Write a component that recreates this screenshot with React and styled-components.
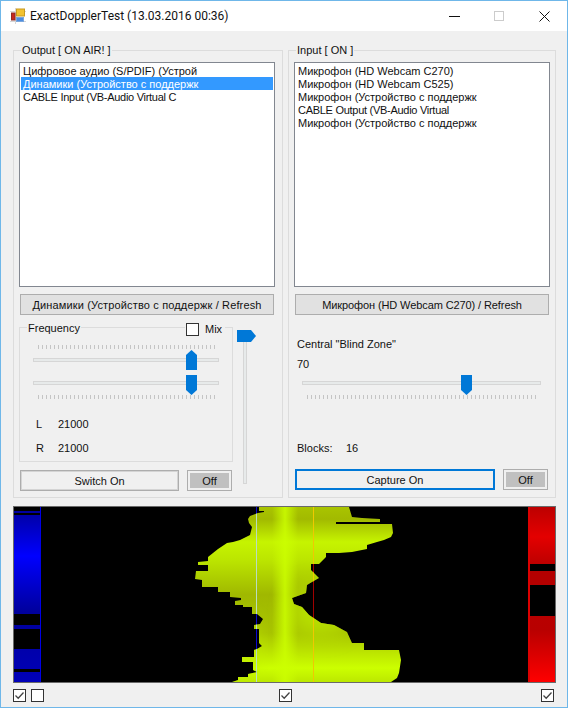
import styled, { createGlobalStyle } from "styled-components";

const GlobalStyle = createGlobalStyle`
  html, body {
    margin: 0;
    padding: 0;
    background: #f0f0f0;
  }
`;

const Win = styled.div`
  box-sizing: border-box;
  width: 568px;
  height: 708px;
  border: 1px solid #6fb7e9;
  background: #f0f0f0;
  display: flex;
  flex-direction: column;
  font-family: "Liberation Sans", Arial, sans-serif;
  font-size: 11px;
  color: #111;
  overflow: hidden;
`;

const TitleBar = styled.div`
  height: 30px;
  flex: none;
  background: #fff;
  display: flex;
  align-items: center;
  padding-left: 9px;
`;

const TitleText = styled.span`
  font-family: Roboto, sans-serif;
  font-size: 12px;
  margin-left: 4px;
  color: #111;
`;

const WinButtons = styled.div`
  margin-left: auto;
  display: flex;
`;

const WinButton = styled.div`
  width: 45px;
  height: 30px;
  display: flex;
  align-items: center;
  justify-content: center;
`;

const Panels = styled.div`
  display: flex;
  gap: 5px;
  margin: 13px 0 0 12px;
`;

const Group = styled.fieldset`
  box-sizing: border-box;
  width: ${(p) => p.$w}px;
  height: 454px;
  flex: none;
  margin: 0;
  padding: 0;
  min-width: 0;
  border: 1px solid #dcdcdc;
`;

const Legend = styled.legend`
  margin-left: 7px;
  padding: 0 1px;
  line-height: 13px;
  white-space: nowrap;
`;

const PanelBody = styled.div`
  padding: 5px 5px 0 5px;
  display: flex;
  flex-direction: column;
`;

const ListBox = styled.div`
  box-sizing: border-box;
  width: 256px;
  height: 225px;
  background: #fff;
  border: 1px solid #828790;
  padding: 1px;
`;

const ListItem = styled.div`
  height: 13px;
  line-height: 15px;
  padding-left: 2px;
  white-space: nowrap;
  letter-spacing: ${(p) => (p.$tight ? "-0.28px" : "0")};
  background: ${(p) => (p.$selected ? "#3399ff" : "transparent")};
  color: ${(p) => (p.$selected ? "#fff" : "#111")};
`;

const WideButton = styled.div`
  box-sizing: border-box;
  width: 254px;
  height: 21px;
  margin: 7px 0 0 1px;
  background: #e1e1e1;
  border: 1px solid #adadad;
  display: flex;
  align-items: center;
  justify-content: center;
  white-space: nowrap;
  letter-spacing: ${(p) => p.$spacing}px;
`;

const Columns = styled.div`
  display: flex;
  margin-top: 13px;
`;

const LeftColumn = styled.div`
  width: 218px;
  flex: none;
`;

const FreqGroup = styled.fieldset`
  box-sizing: border-box;
  width: 214px;
  height: 141px;
  margin: -7px 0 0 0;
  padding: 0;
  min-width: 0;
  border: 1px solid #dcdcdc;
  position: relative;
`;

const FreqLegend = styled.legend`
  margin-left: 7px;
  padding: 0 1px;
  height: 13px;
  line-height: 15px;
`;

const MixBox = styled.div`
  position: absolute;
  top: -11px;
  left: 165px;
  display: flex;
  align-items: center;
  background: #f0f0f0;
  padding: 0 3px 0 1px;
`;

const MixLabel = styled.span`
  margin-left: 6px;
  line-height: 13px;
`;

const Check = styled.div`
  box-sizing: border-box;
  width: 13px;
  height: 13px;
  background: #fff;
  border: 1px solid #333;
  flex: none;
  display: flex;
  align-items: center;
  justify-content: center;
`;

const SliderWrap = styled.div`
  box-sizing: border-box;
  width: ${(p) => p.$w}px;
  height: 20px;
  margin: ${(p) => p.$m};
  padding-top: ${(p) => p.$top}px;
  position: relative;
`;

const Track = styled.div`
  box-sizing: border-box;
  height: 4px;
  background: #e7eaea;
  border: 1px solid #d6d6d6;
`;

const Thumb = styled.svg`
  position: absolute;
  top: 0;
  left: ${(p) => p.$left}px;
  display: block;
`;

const Ticks = styled.div`
  box-sizing: border-box;
  height: 4px;
  width: ${(p) => p.$w}px;
  margin: ${(p) => p.$m};
  background: repeating-linear-gradient(to right, #c4c4c4 0 1px, transparent 1px ${(p) => p.$step}px);
`;

const ValueRow = styled.div`
  display: flex;
  line-height: 13px;
  margin: ${(p) => p.$m};
`;

const ValueKey = styled.span`
  width: ${(p) => p.$w}px;
  flex: none;
`;

const ActionRow = styled.div`
  display: flex;
  align-items: flex-start;
  gap: 8px;
  margin: ${(p) => p.$m};
`;

const ActionButton = styled.div`
  box-sizing: border-box;
  width: ${(p) => p.$w}px;
  height: 21px;
  border: ${(p) => (p.$focus ? "2px solid #0078d7" : "1px solid #adadad")};
  box-shadow: ${(p) => (p.$focus ? "none" : "inset 0 0 0 1px #d4d4d4")};
  background: #f0f0f0;
  display: flex;
  align-items: center;
  justify-content: center;
`;

const OffButton = styled.div`
  box-sizing: border-box;
  width: 45px;
  height: 21px;
  border: 1px solid #adadad;
  background: #f0f0f0;
  padding: 2px;
`;

const OffInner = styled.div`
  height: 100%;
  background: #c0c0c0;
  display: flex;
  align-items: center;
  justify-content: center;
`;

const VerticalSlider = styled.div`
  box-sizing: border-box;
  width: 20px;
  height: 154px;
  margin-top: 2px;
  padding: 10px 0 0 6px;
  position: relative;
`;

const VerticalTrack = styled.div`
  box-sizing: border-box;
  width: 4px;
  height: 144px;
  background: #e7eaea;
  border: 1px solid #d6d6d6;
`;

const BlindLabel = styled.div`
  line-height: 13px;
  margin: ${(p) => p.$m};
`;

const Display = styled.svg`
  display: block;
  flex: none;
  margin: 8px 0 0 12px;
`;

const CheckRow = styled.div`
  display: flex;
  margin: 6px 0 0 12px;
`;

const CheckSpacer = styled.div`
  width: ${(p) => p.$w}px;
  flex: none;
`;

const Tick = () => (
  <svg width="11" height="11" viewBox="0 0 11 11">
    <path d="M1.5 5.5 L4.2 8.2 L9.5 2.5" fill="none" stroke="#444" strokeWidth="1.3" />
  </svg>
);

const AppIcon = () => (
  <svg width="16" height="16" viewBox="0 0 16 16">
    <path d="M0 3.5H16M5.5 0V16M0 13.5H16" stroke="#d6d6d6" />
    <rect x="6.5" y="1" width="8" height="7" fill="#f2c230" stroke="#c89a20" />
    <rect x="1.5" y="5" width="3.5" height="7" fill="#c8261e" stroke="#8e2a22" />
    <rect x="6.5" y="9.5" width="7" height="4" fill="#4d8de0" stroke="#7aa6dc" />
  </svg>
);

const HThumb = ({ left, up }) => (
  <Thumb $left={left} width="11" height="20" viewBox="0 0 11 20">
    <path
      d={up ? "M5.5 0 L11 5 V20 H0 V5 Z" : "M0 0 H11 V15 L5.5 20 L0 15 Z"}
      fill="#0078d7"
    />
  </Thumb>
);

const outline =
  "M268 507 L259 507 L259 511 L264 511 L264 512 L258 513 L250 516 L248 519 L249 523 L252 527 L250 535 L240 540 L233 542 L227 543 L218 549 L208 557 L208 561 L198 562 L198 565 L208 565 L208 571 L196 571 L195 579 L202 580 L202 587 L218 587 L218 592 L230 592 L230 597 L241 598 L241 600 L235 601 L235 605 L243 605 L243 607 L252 607 L252 614 L257 614 L263 619 L260 624 L254 625 L254 629 L259 629 L259 643 L262 646 L257 649 L254 650 L254 657 L242 657 L242 662 L253 662 L253 670 L257 672 L248 674 L248 677 L238 677 L238 680 L232 682 L391 682 L397 678 L399 673 L401 660 L399 650 L364 650 L364 643 L352 643 L347 632 L334 625 L321 623 L309 615 L302 607 L294 604 L292 598 L306 593 L307 585 L312 582 L319 578 L311 570 L311 564 L319 564 L326 557 L326 553 L339 553 L352 552 L367 549 L367 545 L377 542 L384 540 L391 537 L393 533 L392 524 L336 524 L336 522 L380 522 L380 519 L362 518 L352 517 L349 507 Z";

const blueRows = [
  [511, 2],
  [515, 99],
  [625, 4],
  [649, 20],
  [672, 10],
];

const Wave = () => (
  <Display width="543" height="177" viewBox="13 506 543 177">
    <defs>
      <linearGradient id="yellow" x1="0" y1="507" x2="0" y2="682" gradientUnits="userSpaceOnUse">
        <stop offset="0" stopColor="#a9c400" />
        <stop offset="0.07" stopColor="#a2ba00" />
        <stop offset="0.2" stopColor="#c6f400" />
        <stop offset="0.3" stopColor="#bce600" />
        <stop offset="0.5" stopColor="#a0b800" />
        <stop offset="0.72" stopColor="#a8c400" />
        <stop offset="0.92" stopColor="#ccff00" />
        <stop offset="1" stopColor="#bce800" />
      </linearGradient>
      <linearGradient id="stripe" x1="272" y1="0" x2="298" y2="0" gradientUnits="userSpaceOnUse">
        <stop offset="0" stopColor="#ccff00" stopOpacity="0" />
        <stop offset="0.5" stopColor="#ccff00" stopOpacity="0.85" />
        <stop offset="1" stopColor="#ccff00" stopOpacity="0" />
      </linearGradient>
      <linearGradient id="blueBar" x1="0" y1="507" x2="0" y2="682" gradientUnits="userSpaceOnUse">
        <stop offset="0" stopColor="#000098" />
        <stop offset="0.28" stopColor="#0000ff" />
        <stop offset="0.6" stopColor="#00009c" />
        <stop offset="1" stopColor="#0000b8" />
      </linearGradient>
      <linearGradient id="redBar" x1="0" y1="507" x2="0" y2="682" gradientUnits="userSpaceOnUse">
        <stop offset="0" stopColor="#bc0000" />
        <stop offset="0.17" stopColor="#e40000" />
        <stop offset="0.33" stopColor="#bc0000" />
        <stop offset="0.7" stopColor="#b80000" />
        <stop offset="1" stopColor="#ff0000" />
      </linearGradient>
      <clipPath id="waveClip">
        <path d={outline} />
      </clipPath>
      <filter id="soft" x="-50%" y="-50%" width="200%" height="200%">
        <feGaussianBlur stdDeviation="10" />
      </filter>
    </defs>
    <rect x="13.5" y="506.5" width="542" height="176" fill="#000" stroke="#6a6a6a" />

    {/* left meter */}
    {blueRows.map(([y, h]) => (
      <rect key={y} x="14" y={y} width="26" height={h} fill="url(#blueBar)" />
    ))}
    <rect x="40" y="507" width="1" height="175" fill="#0000e6" />

    {/* right meter */}
    <rect x="528" y="507" width="2" height="175" fill="#dc0000" />
    <rect x="530" y="507" width="25" height="57" fill="url(#redBar)" />
    <rect x="530" y="571" width="25" height="14" fill="#b40000" />
    <rect x="530" y="616" width="25" height="66" fill="url(#redBar)" />

    {/* markers over black */}
    <rect x="256" y="507" width="1" height="175" fill="#0a0ad0" />
    <rect x="313" y="507" width="1" height="175" fill="#a00000" />

    {/* spectrum */}
    <g clipPath="url(#waveClip)">
      <rect x="190" y="507" width="220" height="175" fill="url(#yellow)" />
      <ellipse cx="320" cy="610" rx="30" ry="25" fill="#b8e000" filter="url(#soft)" />
      <ellipse cx="240" cy="650" rx="14" ry="30" fill="#c4f000" filter="url(#soft)" />
      <rect x="272" y="507" width="26" height="175" fill="url(#stripe)" />
      <rect x="256" y="507" width="1" height="175" fill="#b9dcc0" />
      <rect x="313" y="507" width="1" height="175" fill="#f0c800" />
    </g>
  </Display>
);

export default function App() {
  return (
    <Win>
      <GlobalStyle />
      <TitleBar>
        <AppIcon />
        <TitleText>ExactDopplerTest (13.03.2016 00:36)</TitleText>
        <WinButtons>
          <WinButton>
            <svg width="11" height="11" viewBox="0 0 11 11">
              <path d="M0 5.5H11" stroke="#111" />
            </svg>
          </WinButton>
          <WinButton>
            <svg width="11" height="11" viewBox="1 0 11 11">
              <rect x="1.5" y="0.5" width="9" height="9" fill="none" stroke="#ccc" />
            </svg>
          </WinButton>
          <WinButton>
            <svg width="11" height="11" viewBox="0 0 11 11">
              <path d="M0.5 0.5L10.5 10.5M10.5 0.5L0.5 10.5" stroke="#111" />
            </svg>
          </WinButton>
        </WinButtons>
      </TitleBar>

      <Panels>
        <Group $w={270}>
          <Legend>Output [ ON AIR! ]</Legend>
          <PanelBody>
            <ListBox>
              <ListItem>Цифровое аудио (S/PDIF) (Устрой</ListItem>
              <ListItem $selected>Динамики (Устройство с поддержк</ListItem>
              <ListItem $tight>CABLE Input (VB-Audio Virtual C</ListItem>
            </ListBox>
            <WideButton $spacing={0.15}>Динамики (Устройство с поддержк / Refresh</WideButton>
            <Columns>
              <LeftColumn>
                <FreqGroup>
                  <FreqLegend>Frequency</FreqLegend>
                  <MixBox>
                    <Check />
                    <MixLabel>Mix</MixLabel>
                  </MixBox>
                  <Ticks $w={177} $step={4} $m="11px 0 0 18px" />
                  <SliderWrap $w={186} $m="1px 0 0 13px" $top={8}>
                    <Track />
                    <HThumb left={153} up />
                  </SliderWrap>
                  <SliderWrap $w={186} $m="5px 0 0 13px" $top={6}>
                    <Track />
                    <HThumb left={153} />
                  </SliderWrap>
                  <Ticks $w={177} $step={4} $m="0 0 0 18px" />
                  <ValueRow $m="19px 0 0 16px">
                    <ValueKey $w={22}>L</ValueKey>
                    <span>21000</span>
                  </ValueRow>
                  <ValueRow $m="11px 0 0 16px">
                    <ValueKey $w={22}>R</ValueKey>
                    <span>21000</span>
                  </ValueRow>
                </FreqGroup>
                <ActionRow $m="8px 0 0 1px">
                  <ActionButton $w={159}>Switch On</ActionButton>
                  <OffButton>
                    <OffInner>Off</OffInner>
                  </OffButton>
                </ActionRow>
              </LeftColumn>
              <VerticalSlider>
                <VerticalTrack />
                <Thumb $left={0} width="19" height="12" viewBox="0 0 19 12">
                  <path d="M0 0 H14 L19 6 L14 12 H0 Z" fill="#0078d7" />
                </Thumb>
              </VerticalSlider>
            </Columns>
          </PanelBody>
        </Group>

        <Group $w={268}>
          <Legend>Input [ ON ]</Legend>
          <PanelBody>
            <ListBox>
              <ListItem>Микрофон (HD Webcam C270)</ListItem>
              <ListItem>Микрофон (HD Webcam C525)</ListItem>
              <ListItem>Микрофон (Устройство с поддержк</ListItem>
              <ListItem $tight>CABLE Output (VB-Audio Virtual</ListItem>
              <ListItem>Микрофон (Устройство с поддержк</ListItem>
            </ListBox>
            <WideButton $spacing={-0.1}>Микрофон (HD Webcam C270) / Refresh</WideButton>
            <BlindLabel $m="23px 0 0 3px">Central "Blind Zone"</BlindLabel>
            <BlindLabel $m="7px 0 0 3px">70</BlindLabel>
            <SliderWrap $w={239} $m="4px 0 0 8px" $top={6}>
              <Track />
              <HThumb left={159} />
            </SliderWrap>
            <Ticks $w={230} $step={4} $m="0 0 0 13px" />
            <ValueRow $m="43px 0 0 3px">
              <ValueKey $w={49}>Blocks:</ValueKey>
              <span>16</span>
            </ValueRow>
            <ActionRow $m="14px 0 0 1px">
              <ActionButton $w={200} $focus>
                Capture On
              </ActionButton>
              <OffButton>
                <OffInner>Off</OffInner>
              </OffButton>
            </ActionRow>
          </PanelBody>
        </Group>
      </Panels>

      <Wave />

      <CheckRow>
        <Check>
          <Tick />
        </Check>
        <CheckSpacer $w={5} />
        <Check />
        <CheckSpacer $w={235} />
        <Check>
          <Tick />
        </Check>
        <CheckSpacer $w={249} />
        <Check>
          <Tick />
        </Check>
      </CheckRow>
    </Win>
  );
}
